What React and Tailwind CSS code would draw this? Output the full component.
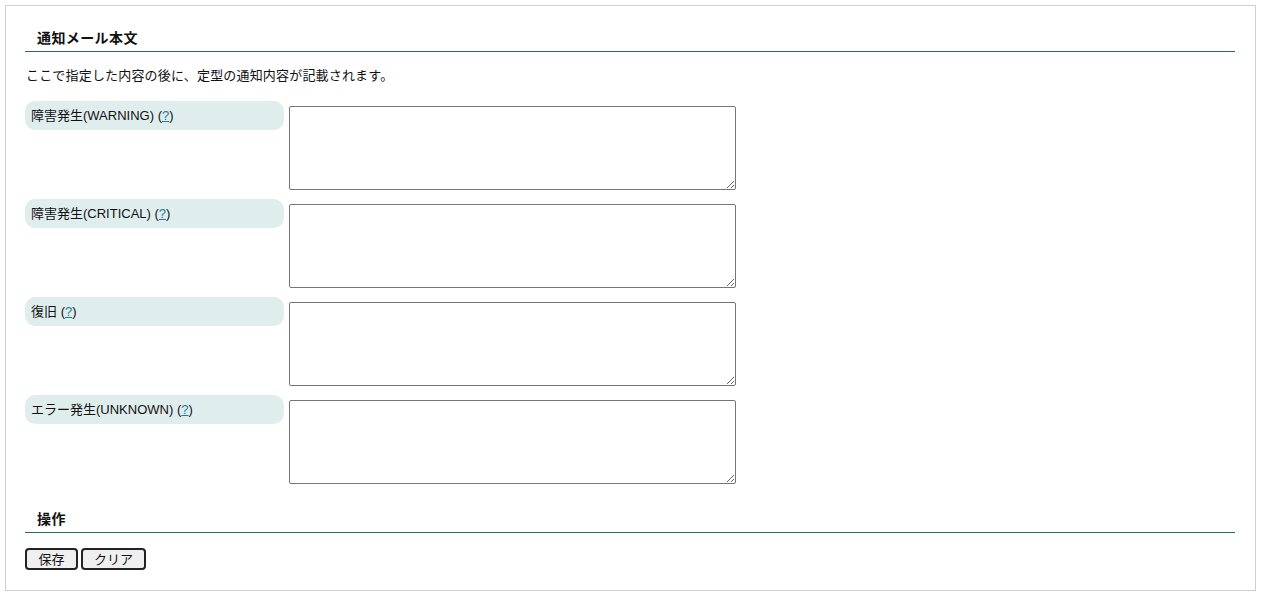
import React from "react";

const rows = [
  { label: "障害発生(WARNING)" },
  { label: "障害発生(CRITICAL)" },
  { label: "復旧" },
  { label: "エラー発生(UNKNOWN)" },
];

function SectionHeading({ children, className = "" }) {
  return (
    <h2
      className={
        "pl-3 pb-[3px] text-[14px] leading-[20px] tracking-[0.4px] font-bold text-[#111] border-b border-[#2a6b64] " +
        className
      }
    >
      {children}
    </h2>
  );
}

export default function App() {
  return (
    <div
      className="bg-white min-h-screen pt-[5px] pl-[5px] pr-[7px] text-[#111]"
      style={{ fontFamily: '"Liberation Sans", "Noto Sans CJK JP", sans-serif' }}
    >
      <div className="border border-[#cfcfcf] pt-[22px] pl-[19px] pr-[20px] pb-[20px]">
        <SectionHeading>通知メール本文</SectionHeading>
        <p className="mt-[15px] mb-[16px] text-[13px] leading-[18px] tracking-[0.18px] pl-px">
          ここで指定した内容の後に、定型の通知内容が記載されます。
        </p>

        {rows.map((row) => (
          <div key={row.label} className="flex mb-[9px]">
            <div className="w-[259px] h-[29px] rounded-[10px] bg-[#e0eded] flex items-center pl-[6px] text-[13px]">
              <span>
                {row.label} (
                <a href="#" className="text-[#1c7c9c] underline">
                  ?
                </a>
                )
              </span>
            </div>
            <textarea className="ml-[5px] mt-[5px] w-[447px] h-[84px] border border-[#767676] rounded-[2px] bg-white" />
          </div>
        ))}

        <SectionHeading className="mt-[25px]">操作</SectionHeading>

        <div className="flex gap-[3px] mt-[15px]">
          <button className="h-[22px] w-[53px] text-[13px] bg-[#efefef] border-2 border-[#222] rounded-[4px] leading-none">
            保存
          </button>
          <button className="h-[22px] w-[65px] text-[13px] bg-[#efefef] border-2 border-[#222] rounded-[4px] leading-none">
            クリア
          </button>
        </div>
      </div>
    </div>
  );
}
